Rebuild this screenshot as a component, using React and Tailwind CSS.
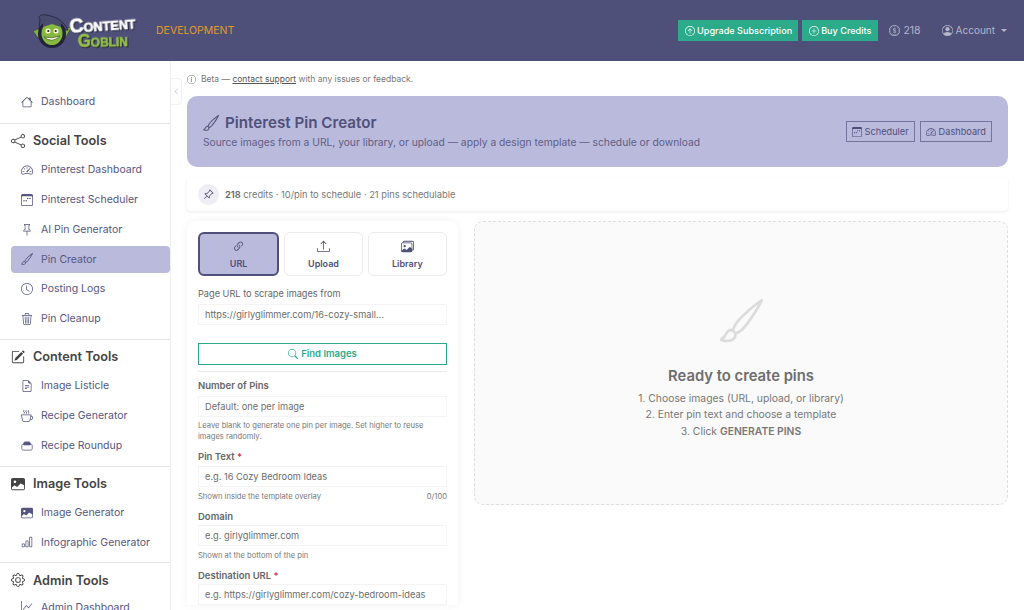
import {
  BsArrowUpCircle, BsPlusCircle, BsCoin, BsPersonCircle, BsHouse, BsShare, BsSpeedometer2, BsCalendar3Week, BsPin,
  BsBrush, BsClock, BsTrash3, BsPencilSquare, BsFileEarmarkText, BsCupHot, BsImageFill, BsBarChart, BsGear,
  BsGraphUp, BsInfoCircle, BsChevronLeft, BsPinAngle, BsLink45Deg, BsUpload, BsImages, BsSearch,
} from "react-icons/bs";

const Logo = () => (
  <svg width="106" height="36" viewBox="0 0 106 36" className="shrink-0 overflow-visible mt-[3px]">
    <path d="M0 17 L10 13 L11 25 L5 24 Z" fill="#7fb03c" stroke="#2a2b45" strokeWidth="0.5" />
    <path d="M38 14 L28 13 L28 25 L33 23 Z" fill="#7fb03c" stroke="#2a2b45" strokeWidth="0.5" />
    <path d="M7 5 C4 3 8 0 13 1 C22 2 31 7 35 16 L6 16 Z" fill="#4a4c6e" stroke="#2a2b45" />
    <circle cx="19" cy="20" r="14" fill="#23243a" />
    <ellipse cx="19" cy="19.5" rx="10.5" ry="11.5" fill="#86b83f" />
    <path d="M10 13 L19 10 L28 13 L28 8 C22 5 15 5 10 8 Z" fill="#4a4c6e" />
    <circle cx="15" cy="17" r="2.6" fill="#f4f4d0" />
    <circle cx="23" cy="17" r="2.6" fill="#f4f4d0" />
    <circle cx="15.3" cy="17" r="1.1" fill="#222" />
    <circle cx="22.7" cy="17" r="1.1" fill="#222" />
    <path d="M11 23 Q19 30 27 22 Q19 25 11 23 Z" fill="#fff" stroke="#3d5a1a" strokeWidth="0.7" />
    <text x="37" y="19" fill="#fff" stroke="#fff" strokeWidth="0.7" fontFamily="Liberation Sans, sans-serif" fontWeight="700" fontSize="13" textLength="66" lengthAdjust="spacingAndGlyphs" transform="rotate(-4 37 19)" className="drop-shadow-[1px_1px_0_#23243a]">
      <tspan fontSize="20">C</tspan>ONTENT
    </text>
    <text x="45" y="33" fill="#94bf4b" stroke="#94bf4b" strokeWidth="0.6" fontFamily="Liberation Sans, sans-serif" fontWeight="700" fontSize="13" textLength="50" lengthAdjust="spacingAndGlyphs" transform="rotate(-1 45 33)" className="drop-shadow-[1px_1px_0_#23243a]">
      <tspan fontSize="18">G</tspan>OBLIN
    </text>
  </svg>
);

const Dish = ({ className }) => (
  <svg viewBox="0 0 16 16" fill="none" stroke="currentColor" strokeWidth="1" className={className}>
    <path d="M3.5 4.5 C3.5 3 5 2.5 6 2.5 H10 C11 2.5 12.5 3 12.5 4.5 V6.5 H3.5 Z" fill="currentColor" />
    <rect x="1" y="5.5" width="14" height="8" rx="2" />
  </svg>
);

const Chip = ({ Icon, children, className = "pr-[6px]" }) => (
  <button className={`h-[21px] pl-[7px] flex items-center gap-[2px] bg-[#2bab8a] text-white text-[9.1px] font-medium ${className}`}>
    <Icon className="w-[10px] h-[10px]" />
    {children}
  </button>
);

const Header = () => (
  <header className="h-[61px] bg-[#4f5079] flex items-center pl-[33px] pr-[17px] shrink-0">
    <Logo />
    <span className="ml-[17px] text-[10.5px] text-[#e09a2b]">DEVELOPMENT</span>
    <div className="ml-auto flex items-center">
      <Chip Icon={BsArrowUpCircle}>Upgrade Subscription</Chip>
      <div className="ml-[4px]"><Chip Icon={BsPlusCircle} className="pr-[7px]">Buy Credits</Chip></div>
      <div className="ml-[11px] flex items-center gap-[3px] text-[10.5px] text-[#b4b5c8]"><BsCoin className="w-[11px] h-[11px]" />218</div>
      <div className="ml-[21px] flex items-center gap-[3px] text-[10px] text-[#b4b5c8]">
        <BsPersonCircle className="w-[11px] h-[11px]" />Account
        <span className="ml-[3px] border-x-[3px] border-t-[3px] border-x-transparent border-t-[#b4b5c8]" />
      </div>
    </div>
  </header>
);

const NavItem = ({ Icon, label, active }) => (
  <div className={`h-[27px] ml-[11px] pl-[10px] flex items-center gap-[8px] rounded-[4px] text-[10.5px] text-[#55567f] ${active ? "bg-[#babadd]" : ""}`}>
    <Icon className="w-[12px] h-[12px] shrink-0" />
    {label}
  </div>
);

const NavGroup = ({ Icon, title, items, last }) => (
  <div className={`pt-[7px] ${last ? "" : "pb-[6.5px] border-b border-[#e2e2e8]"}`}>
    <div className="h-[20px] pl-[11px] flex items-center gap-2 text-[12.7px] font-semibold text-[#444]">
      <Icon className="w-[14px] h-[14px] shrink-0" />
      {title}
    </div>
    <div className={`${last ? "mt-[3.5px]" : "mt-[5.5px]"} flex flex-col gap-[2.8px]`}>
      {items.map((it) => <NavItem key={it.label} {...it} />)}
    </div>
  </div>
);

const Sidebar = () => (
  <aside className="w-[171px] shrink-0 border-r border-[#eeeeee] bg-white pt-[27px] overflow-hidden">
    <div className="pb-[8px] border-b border-[#e2e2e8]">
      <NavItem Icon={BsHouse} label="Dashboard" />
    </div>
    <NavGroup Icon={BsShare} title="Social Tools" items={[
      { Icon: BsSpeedometer2, label: "Pinterest Dashboard" },
      { Icon: BsCalendar3Week, label: "Pinterest Scheduler" },
      { Icon: BsPin, label: "AI Pin Generator" },
      { Icon: BsBrush, label: "Pin Creator", active: true },
      { Icon: BsClock, label: "Posting Logs" },
      { Icon: BsTrash3, label: "Pin Cleanup" },
    ]} />
    <NavGroup Icon={BsPencilSquare} title="Content Tools" items={[
      { Icon: BsFileEarmarkText, label: "Image Listicle" },
      { Icon: BsCupHot, label: "Recipe Generator" },
      { Icon: Dish, label: "Recipe Roundup" },
    ]} />
    <NavGroup Icon={BsImageFill} title="Image Tools" items={[
      { Icon: BsImageFill, label: "Image Generator" },
      { Icon: BsBarChart, label: "Infographic Generator" },
    ]} />
    <NavGroup Icon={BsGear} title="Admin Tools" last items={[
      { Icon: BsGraphUp, label: "Admin Dashboard" },
    ]} />
  </aside>
);

const Tab = ({ Icon, label, active }) => (
  <div className={`flex-1 h-[44px] pt-[2px] rounded-[6px] flex flex-col items-center justify-center gap-[5px] text-[9px] leading-[12px] font-semibold text-[#4f5079] ${active ? "bg-[#babadd] border-2 border-[#4f5079]" : "bg-white border border-[#ececf0]"}`}>
    <Icon className="w-[13px] h-[13px]" />
    {label}
  </div>
);

const Label = ({ children, req }) => (
  <div className="text-[9.5px] font-semibold text-[#666] leading-[14px]">
    {children}{req && <span className="text-[#d0304c]"> *</span>}
  </div>
);

const Field = ({ children, className = "" }) => (
  <div className={`h-[21px] border border-[#f4f4f4] bg-white px-[6px] flex items-center text-[9.25px] text-[#6c6c6c] ${className}`}>
    {children}
  </div>
);

const Hint = ({ children }) => (
  <div className="text-[7.6px] leading-[11px] text-[#777]">{children}</div>
);

const FormCard = () => (
  <div className="w-[271px] shrink-0 bg-white rounded-t-[9px] shadow-[0_0_8px_rgba(0,0,0,0.06)] px-[11px] pt-[11px]">
    <div className="flex gap-[4.5px]">
      <Tab Icon={BsLink45Deg} label="URL" active />
      <Tab Icon={BsUpload} label="Upload" />
      <Tab Icon={BsImages} label="Library" />
    </div>
    <div className="mt-[11px] text-[9.2px] leading-[14px] text-[#666]">Page URL to scrape images from</div>
    <Field className="mt-[3px]">https://girlyglimmer.com/16-cozy-small...</Field>
    <button className="mt-[18px] w-full h-[22px] border-[1.5px] border-[#2bab8a] flex items-center justify-center gap-[3px] text-[9.5px] font-semibold text-[#2bab8a]">
      <BsSearch className="w-[10px] h-[10px]" />Find Images
    </button>
    <div className="mt-[6px] border-t border-[#e8e8e8]" />
    <div className="mt-[7px]"><Label>Number of Pins</Label></div>
    <Field className="mt-[3px]">Default: one per image</Field>
    <div className="mt-[3px]"><Hint>Leave blank to generate one pin per image. Set higher to reuse images randomly.</Hint></div>
    <div className="mt-[8px]"><Label req>Pin Text</Label></div>
    <Field className="mt-[2px]">e.g. 16 Cozy Bedroom Ideas</Field>
    <div className="mt-[4px] flex justify-between"><Hint>Shown inside the template overlay</Hint><Hint>0/100</Hint></div>
    <div className="mt-[8px]"><Label>Domain</Label></div>
    <Field className="mt-[1px]">e.g. girlyglimmer.com</Field>
    <div className="mt-[4px]"><Hint>Shown at the bottom of the pin</Hint></div>
    <div className="mt-[8px]"><Label req>Destination URL</Label></div>
    <Field className="mt-[1px]">e.g. https://girlyglimmer.com/cozy-bedroom-ideas</Field>
  </div>
);

const Main = () => (
  <main className="relative flex-1 min-w-0 overflow-hidden pl-[16px] pr-[16px] pt-[11px]">
    <div className="absolute left-[-1px] top-[17px] w-[12px] h-[27px] bg-white border border-[#f2f2f2] rounded-r-[4px] flex items-center justify-center text-[#a0a0c0]">
      <BsChevronLeft className="w-[7px] h-[7px]" />
    </div>
    <div className="flex items-center gap-[5px] text-[8.5px] leading-[14px] text-[#777]">
      <BsInfoCircle className="w-[9px] h-[9px]" />
      <span>Beta — <span className="underline text-[#555]">contact support</span> with any issues or feedback.</span>
    </div>
    <div className="mt-[10px] h-[71px] bg-[#babadd] rounded-[10px] pl-[16px] pr-[16px] flex items-center justify-between">
      <div>
        <div className="flex items-center gap-[6px] text-[15.2px] leading-[20px] font-semibold text-[#4f5079]">
          <BsBrush className="w-[16px] h-[16px]" />Pinterest Pin Creator
        </div>
        <div className="mt-[1px] text-[10.27px] leading-[16px] text-[#5f6085]">Source images from a URL, your library, or upload — apply a design template — schedule or download</div>
      </div>
      <div className="flex gap-[5px]">
        <div className="h-[21px] px-[5px] border border-[#73739c] flex items-center gap-[3px] text-[9.2px] text-[#4f5079]"><BsCalendar3Week className="w-[10px] h-[10px]" />Scheduler</div>
        <div className="h-[21px] px-[5px] border border-[#73739c] flex items-center gap-[3px] text-[9.2px] text-[#4f5079]"><BsSpeedometer2 className="w-[10px] h-[10px]" />Dashboard</div>
      </div>
    </div>
    <div className="mt-[11px] h-[33px] rounded-b-[4px] bg-white shadow-[0_1px_3px_rgba(0,0,0,0.08)] pl-[11px] flex items-center gap-[6px] text-[9.3px] text-[#777]">
      <span className="w-[21px] h-[21px] rounded-full bg-[#eeeef4] flex items-center justify-center text-[#4f5079]"><BsPinAngle className="w-[11px] h-[11px]" /></span>
      <span className="pt-[1px]"><b className="font-semibold text-[#666]">218</b> credits · 10/pin to schedule · 21 pins schedulable</span>
    </div>
    <div className="mt-[10px] flex items-start gap-[16px]">
      <FormCard />
      <div className="flex-1 h-[284px] rounded-[9px] border border-dashed border-[#dedede] bg-[#fafafa] flex flex-col items-center pt-[77px]">
        <BsBrush className="w-[44px] h-[44px] text-[#dcdcdc]" />
        <div className="mt-[23px] text-[14.8px] leading-[20px] font-semibold text-[#6e6e6e]">Ready to create pins</div>
        <div className="mt-[4px] text-center text-[10.35px] leading-[16.4px] text-[#777]">
          <div>1. Choose images (URL, upload, or library)</div>
          <div>2. Enter pin text and choose a template</div>
          <div>3. Click <b className="font-semibold">GENERATE PINS</b></div>
        </div>
      </div>
    </div>
  </main>
);

export default function App() {
  return (
    <div className="h-[610px] w-[1024px] overflow-hidden flex flex-col bg-white font-['Inter',sans-serif]">
      <Header />
      <div className="flex flex-1 min-h-0">
        <Sidebar />
        <Main />
      </div>
    </div>
  );
}
